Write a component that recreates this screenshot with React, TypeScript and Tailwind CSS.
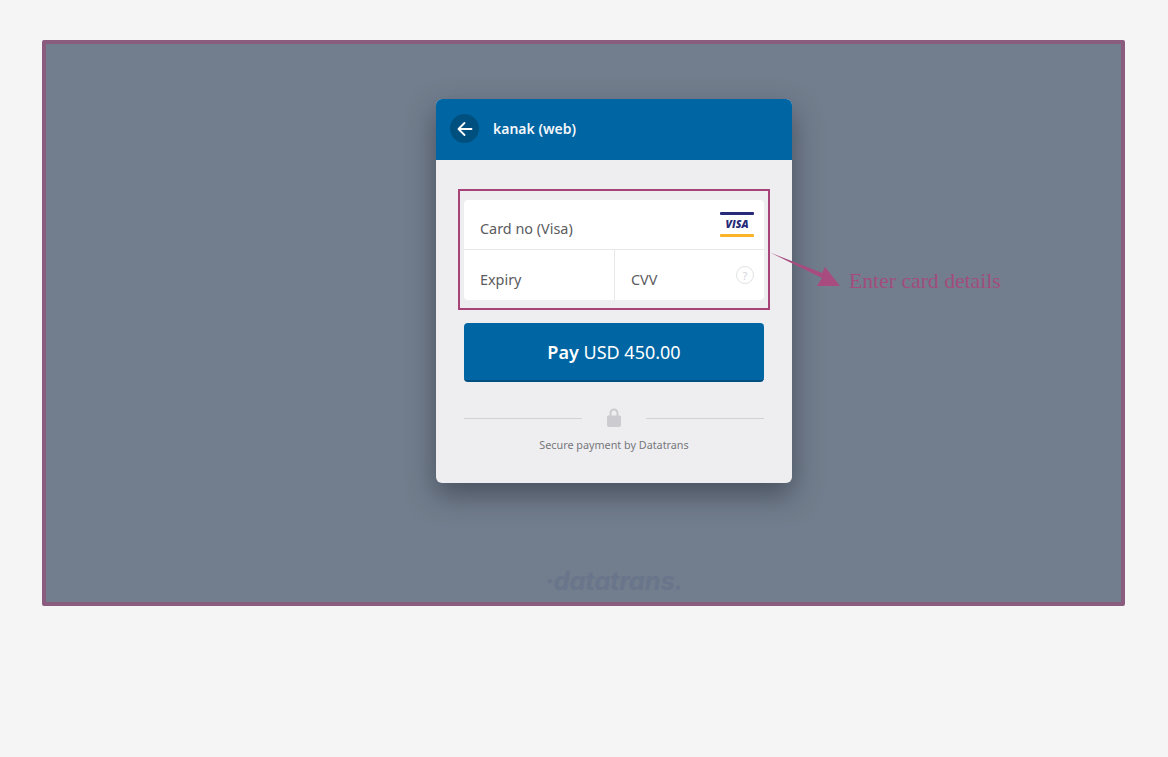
import React from "react";

export default function App() {
  return (
    <div className="h-[757px] w-[1168px] overflow-hidden bg-[#f5f5f5] pl-[42px] pr-[43px] pt-[40px] font-['Noto_Sans',sans-serif]">
      <div className="relative flex h-[566px] w-[1083px] flex-col items-center rounded-[2px] border-4 border-[#8a5c7e] bg-[#727d8d] pl-[61px] pt-[55px]">
        <div className="w-[356px] overflow-hidden rounded-[6px] bg-[#eeeef1] shadow-[0_12px_28px_rgba(30,38,50,0.5)]">
          <div className="flex h-[61px] items-center gap-[14px] bg-[#0065a3] pb-[2px] pl-[14px]">
            <div className="flex h-[29px] w-[29px] items-center justify-center rounded-full bg-[#00507f]">
              <svg width="16" height="16" viewBox="0 0 16 16" fill="none" stroke="#ffffff" strokeWidth="1.8" strokeLinecap="round" strokeLinejoin="round">
                <path d="M14.5 8H1.8M7.5 2 1.5 8l6 6" />
              </svg>
            </div>
            <span className="text-[14px] font-semibold leading-none text-[#f4f7fa]">kanak (web)</span>
          </div>
          <div className="flex flex-col px-[28px] pb-[30px] pt-[40px]">
            <div className="relative rounded-[4px] bg-white text-[14.4px] text-[#5b5b5e]">
              <div className="flex h-[50px] items-end justify-between border-b border-[#e8e8ea] pb-[13px] pl-[16px] pr-[10px]">
                <span className="leading-none">Card no (Visa)</span>
                <div className="mb-[-1px] flex h-[25px] w-[34px] flex-col justify-between">
                  <div className="h-[3px] rounded-[1px] bg-[#262a78]" />
                  <span className="text-center font-['Open_Sans',sans-serif] text-[10.5px] font-extrabold italic leading-none text-[#262a78]">VISA</span>
                  <div className="h-[3px] rounded-[1px] bg-[#fbb32a]" />
                </div>
              </div>
              <div className="flex h-[50px]">
                <div className="flex w-[151px] items-end border-r border-[#e8e8ea] pb-[13px] pl-[16px]">
                  <span className="leading-none">Expiry</span>
                </div>
                <div className="flex flex-1 items-end justify-between pb-[13px] pl-[16px] pr-[10px]">
                  <span className="leading-none">CVV</span>
                  <div className="mb-[3px] flex h-[18px] w-[18px] items-center justify-center rounded-full border border-[#e2e2e4] text-[11px] leading-none text-[#d4d4d6]">?</div>
                </div>
              </div>
            </div>
            <button className="mt-[23px] h-[59px] rounded-[4px] border-b-2 border-[#004f80] bg-[#0065a3] pt-[2px] text-[18px] text-white">
              <span className="font-semibold">Pay</span> USD 450.00
            </button>
            <div className="mt-[27px] flex items-center">
              <div className="h-px flex-1 bg-[#d2d2d5]" />
              <div className="flex w-[64px] justify-center">
                <svg className="relative -top-px" width="16" height="19" viewBox="0 0 16 19" fill="#ccccd0">
                  <path fillRule="evenodd" d="M3.5 7.5V5a4.5 4.5 0 0 1 9 0v2.5H14a2 2 0 0 1 1 1.6v7.9a2 2 0 0 1-2 2H3a2 2 0 0 1-2-2V9.1a2 2 0 0 1 1-1.6h1.5Zm2 0h5V5a2.5 2.5 0 0 0-5 0v2.5Z" />
                </svg>
              </div>
              <div className="h-px flex-1 bg-[#d2d2d5]" />
            </div>
            <p className="mt-[9px] text-center text-[10.8px] leading-[16px] text-[#77777b]">Secure payment by Datatrans</p>
          </div>
        </div>
        <div className="mt-[82px] font-['Inter',sans-serif] text-[25.5px] font-bold italic leading-[32px] tracking-[-0.2px] text-[#69758b]">·datatrans.</div>

        <div className="absolute left-[412px] top-[145px] h-[121px] w-[312px] border-2 border-[#a8437a]" />
        <svg className="absolute left-[722px] top-[206px]" width="74" height="42" viewBox="0 0 74 42" fill="#a84c7f">
          <path d="M2 2.5 L54 23 L57 17 L72 36 L49 36 L54 28 Z" />
        </svg>
        <span className="absolute left-[803px] top-[223px] font-['Liberation_Serif',serif] text-[21.7px] leading-[28px] text-[#a24d7d]">Enter card details</span>
      </div>
    </div>
  );
}
